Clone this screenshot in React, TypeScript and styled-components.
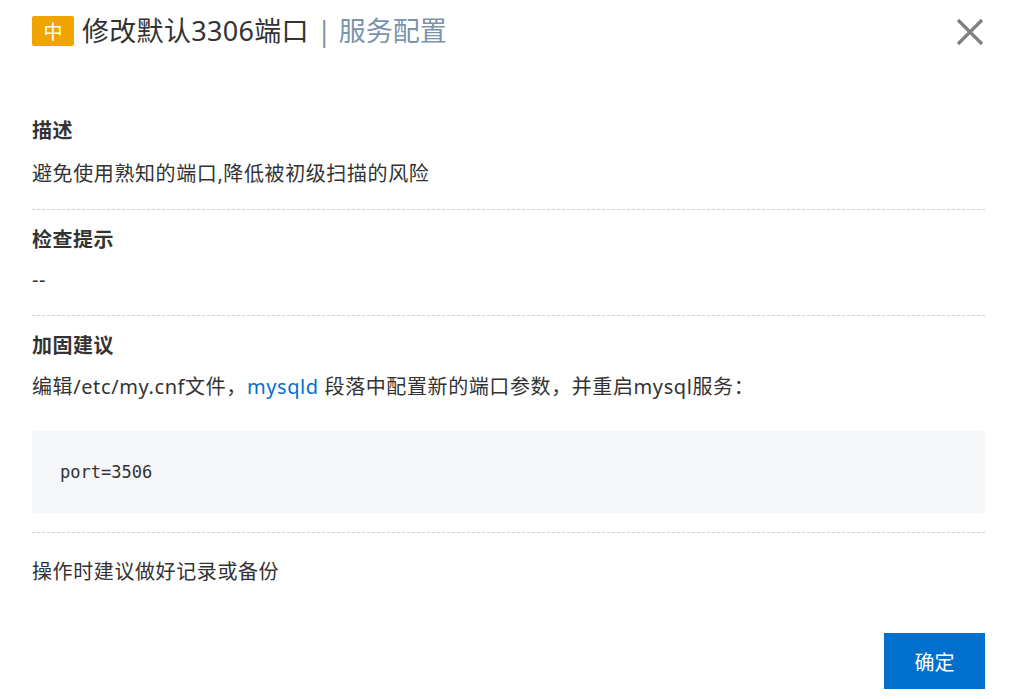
import styled, { createGlobalStyle } from "styled-components";

const GlobalStyle = createGlobalStyle`
    body {
        margin: 0;
        background: #fff;
        font-family: "Noto Sans", "Noto Sans CJK SC", sans-serif;
        color: #333;
    }
`;

interface SectionOptions {
    title?: string;
    gap?: number;
    children: React.ReactNode;
    last?: boolean;
}

const Section = ({ title, gap = 14, children, last }: SectionOptions) => {
    return (
        <StyledSection $last={last}>
            {title && <SectionTitle $gap={gap}>{title}</SectionTitle>}
            {children}
        </StyledSection>
    );
};

const CloseIcon = () => (
    <svg width="28" height="28" viewBox="0 0 28 28">
        <path d="M2 2 L26 26 M26 2 L2 26" stroke="#808080" strokeWidth="3.2" fill="none" />
    </svg>
);

const App = () => {
    return (
        <>
            <GlobalStyle />
            <Dialog>
                <Header>
                    <TitleRow>
                        <Badge>中</Badge>
                        <Title>修改默认3306端口</Title>
                        <SubTitle>| 服务配置</SubTitle>
                    </TitleRow>
                    <CloseButton aria-label="close">
                        <CloseIcon />
                    </CloseButton>
                </Header>
                <Section title="描述" gap={15}>
                    <Text>避免使用熟知的端口,降低被初级扫描的风险</Text>
                </Section>
                <Section title="检查提示" gap={12}>
                    <Text>--</Text>
                </Section>
                <Section title="加固建议" gap={13}>
                    <Text>
                        编辑/etc/my.cnf文件，<Link>mysqld</Link> 段落中配置新的端口参数，并重启mysql服务：
                    </Text>
                    <CodeBlock>port=3506</CodeBlock>
                </Section>
                <Section last>
                    <Text>操作时建议做好记录或备份</Text>
                </Section>
                <Footer>
                    <PrimaryButton>确定</PrimaryButton>
                </Footer>
            </Dialog>
        </>
    );
};

const Dialog = styled.div`
    width: 1015px;
    height: 699px;
    box-sizing: border-box;
    padding: 0 30px 0 32px;
    display: flex;
    flex-direction: column;
    overflow: hidden;
`;

const Header = styled.div`
    display: flex;
    justify-content: space-between;
    align-items: flex-start;
    padding-top: 16px;
    height: 101px;
    box-sizing: border-box;
`;

const TitleRow = styled.div`
    display: flex;
    align-items: center;
    height: 30px;
`;

const Badge = styled.span`
    display: inline-flex;
    align-items: center;
    justify-content: center;
    width: 42px;
    height: 30px;
    border-radius: 2px;
    background: #f0a400;
    color: #fff;
    font-size: 19px;
    margin-right: 8px;
`;

const Title = styled.span`
    font-size: 27px;
    color: #333;
    line-height: 30px;
    letter-spacing: 0.3px;
`;

const SubTitle = styled.span`
    font-size: 27px;
    color: #7b93ab;
    line-height: 30px;
    margin-left: 8px;
`;

const CloseButton = styled.button`
    border: none;
    background: none;
    padding: 0;
    margin-top: 2px;
    margin-right: 1px;
    cursor: pointer;
    display: flex;
`;

const StyledSection = styled.div<{ $last?: boolean }>`
    padding-top: ${(p) => (p.$last ? "25px" : "16px")};
    padding-bottom: ${(p) => (p.$last ? "0" : "21px")};
    border-bottom: ${(p) => (p.$last ? "none" : "1px dashed #cfcfcf")};
`;

const SectionTitle = styled.div<{ $gap: number }>`
    font-size: 20px;
    font-weight: bold;
    line-height: 28px;
    color: #333;
    letter-spacing: 0.5px;
    margin-bottom: ${(p) => p.$gap}px;
`;

const Text = styled.div`
    font-size: 20px;
    line-height: 28px;
    color: #333;
    letter-spacing: 0.6px;
`;

const Link = styled.a`
    color: #0070cc;
    text-decoration: none;
    cursor: pointer;
`;

const CodeBlock = styled.pre`
    margin: 30px 0 -2px;
    background: #f6f7f9;
    border-radius: 2px;
    height: 82px;
    box-sizing: border-box;
    padding: 0 28px;
    display: flex;
    align-items: center;
    font-family: "DejaVu Sans Mono", "Liberation Mono", monospace;
    font-size: 17px;
    color: #333;
`;

const Footer = styled.div`
    display: flex;
    justify-content: flex-end;
    margin-top: auto;
    padding-bottom: 10px;
`;

const PrimaryButton = styled.button`
    width: 101px;
    height: 56px;
    border: none;
    background: #0070cc;
    color: #fff;
    font-size: 20px;
    font-family: "Noto Sans", "Noto Sans CJK SC", sans-serif;
    cursor: pointer;
`;

export default App;
